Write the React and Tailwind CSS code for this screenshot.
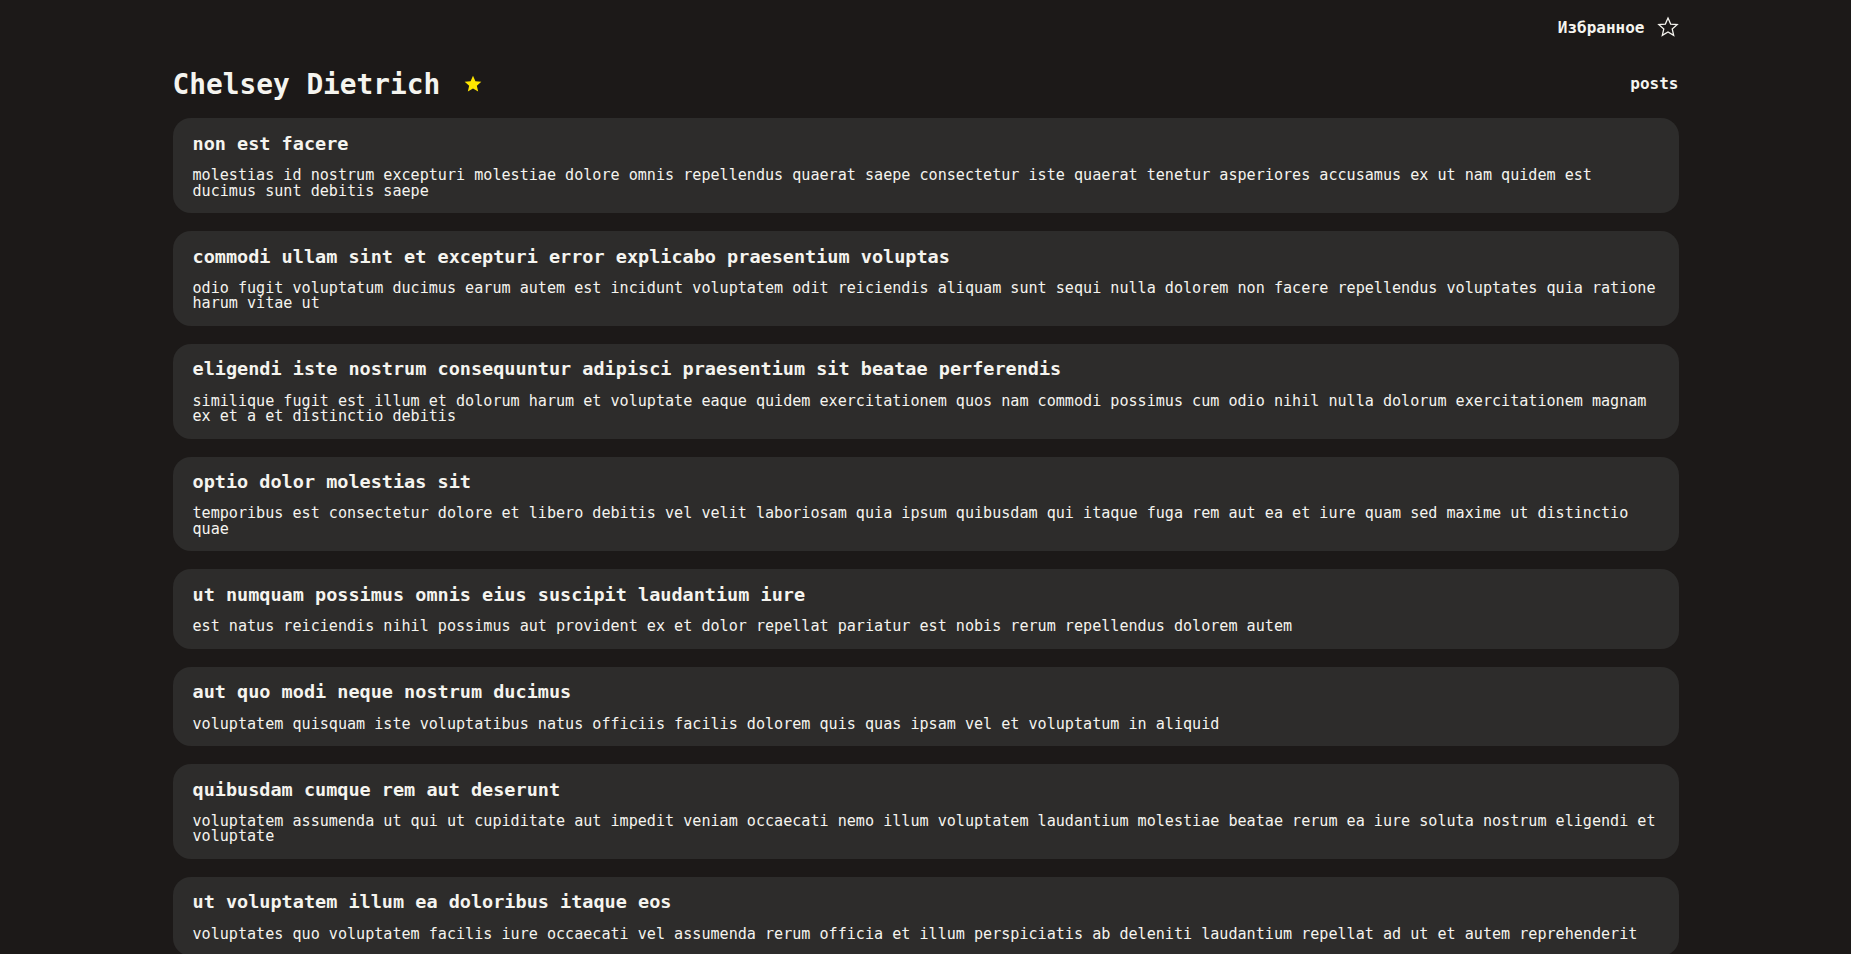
import React from 'react';

const user = { name: 'Chelsey Dietrich' };

const posts = [
    { id: 41, title: 'non est facere', body: 'molestias id nostrum excepturi molestiae dolore omnis repellendus quaerat saepe consectetur iste quaerat tenetur asperiores accusamus ex ut nam quidem est ducimus sunt debitis saepe' },
    { id: 42, title: 'commodi ullam sint et excepturi error explicabo praesentium voluptas', body: 'odio fugit voluptatum ducimus earum autem est incidunt voluptatem odit reiciendis aliquam sunt sequi nulla dolorem non facere repellendus voluptates quia ratione harum vitae ut' },
    { id: 43, title: 'eligendi iste nostrum consequuntur adipisci praesentium sit beatae perferendis', body: 'similique fugit est illum et dolorum harum et voluptate eaque quidem exercitationem quos nam commodi possimus cum odio nihil nulla dolorum exercitationem magnam ex et a et distinctio debitis' },
    { id: 44, title: 'optio dolor molestias sit', body: 'temporibus est consectetur dolore et libero debitis vel velit laboriosam quia ipsum quibusdam qui itaque fuga rem aut ea et iure quam sed maxime ut distinctio quae' },
    { id: 45, title: 'ut numquam possimus omnis eius suscipit laudantium iure', body: 'est natus reiciendis nihil possimus aut provident ex et dolor repellat pariatur est nobis rerum repellendus dolorem autem' },
    { id: 46, title: 'aut quo modi neque nostrum ducimus', body: 'voluptatem quisquam iste voluptatibus natus officiis facilis dolorem quis quas ipsam vel et voluptatum in aliquid' },
    { id: 47, title: 'quibusdam cumque rem aut deserunt', body: 'voluptatem assumenda ut qui ut cupiditate aut impedit veniam occaecati nemo illum voluptatem laudantium molestiae beatae rerum ea iure soluta nostrum eligendi et voluptate' },
    { id: 48, title: 'ut voluptatem illum ea doloribus itaque eos', body: 'voluptates quo voluptatem facilis iure occaecati vel assumenda rerum officia et illum perspiciatis ab deleniti laudantium repellat ad ut et autem reprehenderit' },
    { id: 49, title: 'laborum non sunt aut ut assumenda perspiciatis voluptas', body: 'inventore ab sint natus fugit id nulla sequi architecto nihil quaerat eos tenetur in in eum veritatis non quibusdam officiis aspernatur cumque aut commodi aut' },
    { id: 50, title: 'repellendus qui recusandae incidunt voluptates tenetur qui omnis exercitationem', body: 'error suscipit maxime adipisci consequuntur recusandae voluptas eligendi et est et voluptates quia distinctio ab amet quaerat molestiae et vitae adipisci impedit sequi nesciunt quis consectetur' },
];

// star shape used for both the outline (favourites link) and the filled one
const StarIcon = ({ filled, className }) => (
    <svg viewBox="0 0 24 24" className={className} fill={filled ? 'currentColor' : 'none'} stroke="currentColor" strokeWidth={filled ? 0 : 1.4} strokeLinejoin="miter">
        <path d="M12 2.2l2.9 6.6 7.1.6-5.4 4.7 1.6 7-6.2-3.7-6.2 3.7 1.6-7L2 9.4l7.1-.6z" />
    </svg>
);

const PostCard = ({ post }) => (
    <li className="bg-[#2d2c2b] rounded-[18px] px-5 pt-[16.5px] pb-[14px]">
        <h2 className="text-[18.5px] leading-none font-bold mb-[14.8px]">{post.title}</h2>
        <p className="text-[15.1px] leading-[15.5px]">{post.body}</p>
    </li>
);

export default function App() {
    return (
        <div className="min-h-screen bg-[#1c1918] text-[#f5f4ef] font-['DejaVu_Sans_Mono',monospace]">
            <div className="max-w-[1506px] mx-auto">
                <header className="pt-[18px] flex justify-end">
                    <a href="#" className="h-[20px] flex items-center gap-3 text-[16px] leading-none font-bold">
                        Избранное
                        <StarIcon className="w-[22px] h-[22px] -translate-y-[1px]" />
                    </a>
                </header>
                <div className="mt-[32.5px] mb-[20px] flex items-center justify-between">
                    <div className="flex items-center">
                        <h1 className="text-[27.8px] leading-none font-bold">{user.name}</h1>
                        <StarIcon filled className="w-[20px] h-[20px] ml-[23px] text-[#ffe600]" />
                    </div>
                    <span className="text-[16px] leading-none font-bold">posts</span>
                </div>
                <ul className="flex flex-col gap-[18px] pb-10">
                    {posts.map((p) => (
                        <PostCard key={p.id} post={p} />
                    ))}
                </ul>
            </div>
        </div>
    );
}
